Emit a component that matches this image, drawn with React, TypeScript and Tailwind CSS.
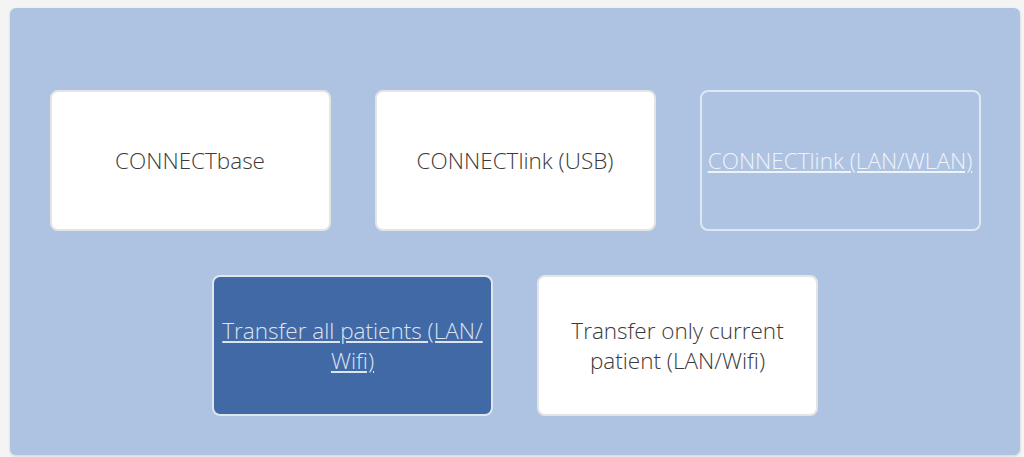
const cardBase =
  "w-[281px] h-[141px] rounded-[8px] border-2 flex items-center justify-center text-center px-1 text-[22.5px] leading-[30px] font-light";

export default function App() {
  return (
    <div
      className="w-[1024px] h-[457px] bg-[#f4f4f4] pt-2 pl-[10px] pr-1"
      style={{ fontFamily: '"Open Sans", sans-serif' }}
    >
      <div className="w-[1010px] h-[447px] rounded-[6px] bg-[#aec3e1] shadow-[0_1px_3px_rgba(0,0,0,0.15)] flex flex-col items-center pt-[82px] gap-[44px]">
        <div className="flex gap-[44px]">
          <div className={`${cardBase} bg-white border-[#e4e4e4] text-[#3a3a3a]`}>
            CONNECTbase
          </div>
          <div className={`${cardBase} bg-white border-[#e4e4e4] text-[#3a3a3a]`}>
            CONNECTlink (USB)
          </div>
          <div className={`${cardBase} bg-transparent border-[#dfe7f2] text-[#eef3fa] underline underline-offset-2`}>
            CONNECTlink (LAN/WLAN)
          </div>
        </div>
        <div className="flex gap-[44px]">
          <div className={`${cardBase} h-[139px] bg-[#4169a6] border-[#dfe6ef] text-[#dbe4f2] underline underline-offset-2`}>
            Transfer all patients (LAN/ Wifi)
          </div>
          <div className={`${cardBase} h-[139px] bg-white border-[#e4e4e4] text-[#3a3a3a]`}>
            Transfer only current patient (LAN/Wifi)
          </div>
        </div>
      </div>
    </div>
  );
}
